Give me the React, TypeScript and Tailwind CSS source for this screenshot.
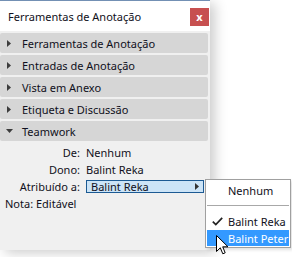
import React from 'react';

const sections = [
  { id: 'ferramentas', name: 'Ferramentas de Anotação', open: false },
  { id: 'entradas', name: 'Entradas de Anotação', open: false },
  { id: 'vista', name: 'Vista em Anexo', open: false },
  { id: 'etiqueta', name: 'Etiqueta e Discussão', open: false },
  { id: 'teamwork', name: 'Teamwork', open: true },
];

const fields = [
  { label: 'De:', value: 'Nenhum' },
  { label: 'Dono:', value: 'Balint Reka' },
];

function Caret({ open }: { open: boolean }) {
  if (open) {
    return (
      <svg width="7" height="4" viewBox="0 0 7 4" className="ml-[6px] mr-[9px] shrink-0">
        <path d="M0 0 L7 0 L3.5 4 Z" fill="#3c3c3c" />
      </svg>
    );
  }
  return (
    <svg width="4" height="7" viewBox="0 0 4 7" className="ml-[7px] mr-[11px] shrink-0">
      <path d="M0 0 L4 3.5 L0 7 Z" fill="#3c3c3c" />
    </svg>
  );
}

function Cursor() {
  return (
    <svg width="13" height="21" viewBox="0 0 13 21" className="absolute left-[216px] top-[235px]">
      <path
        d="M0.5 0.5 L0.5 16.5 L4.3 12.8 L6.8 18.8 L9.2 17.8 L6.7 11.8 L12 11.8 Z"
        fill="#ffffff"
        stroke="#000000"
        strokeWidth="1"
        strokeLinejoin="miter"
      />
    </svg>
  );
}

export default function App() {
  return (
    <div className="relative w-[292px] h-[257px] overflow-hidden bg-white text-[11px] text-[#101020] whitespace-nowrap font-['Noto_Sans',sans-serif]">
      <div className="w-[210px] h-[250px] bg-[#f0f0f0] border-t border-[#7390b4] shadow-[5px_3px_12px_rgba(0,0,0,0.2)] flex flex-col">
        <div className="h-[30px] bg-white flex items-center justify-between pl-[8px] pr-[1px]">
          <span className="text-[11px] leading-none">Ferramentas de Anotação</span>
          <div className="w-[19px] h-[18px] mt-[2px] bg-[#c75050] text-white flex items-center justify-center text-[11px] font-bold leading-none pb-[1px]">
            x
          </div>
        </div>

        <div className="flex flex-col gap-[2px] pt-[2px]">
          {sections.map((s) => (
            <div
              key={s.id}
              className="h-[20px] mr-[2px] bg-[#d6d6d6] rounded-[2px] flex items-center leading-none"
            >
              <Caret open={s.open} />
              <span>{s.name}</span>
            </div>
          ))}
        </div>

        <div className="pt-[3px] leading-none">
          {fields.map((f) => (
            <div key={f.label} className="h-[17px] flex items-center">
              <span className="w-[80px] text-right">{f.label}</span>
              <span className="ml-[6px]">{f.value}</span>
            </div>
          ))}
          <div className="h-[17px] flex items-center">
            <span className="w-[80px] text-right">Atribuído a:</span>
            <div className="ml-[6px] w-[118px] h-[13px] bg-[#cce4f7] border border-[#1c5a93] flex items-center justify-between pl-[4px] pr-[4px]">
              <span>Balint Reka</span>
              <svg width="4" height="7" viewBox="0 0 4 7">
                <path d="M0 0 L4 3.5 L0 7 Z" fill="#333333" />
              </svg>
            </div>
          </div>
          <div className="h-[16px] flex items-center pl-[5px]">Nota: Editável</div>
        </div>
      </div>

      <div className="absolute left-[205px] top-[179px] w-[86px] bg-white border border-[#a0a0a0] p-[1px] leading-none shadow-[2px_2px_3px_rgba(0,0,0,0.12)]">
        <div className="h-[18px] flex items-center pl-[21px]">Nenhum</div>
        <div className="h-px bg-[#a8a8a8] my-[6px]" />
        <div className="h-[18px] flex items-center">
          <svg width="11" height="9" viewBox="0 0 11 9" className="ml-[5px] mr-[5px] shrink-0">
            <path d="M0.8 4.6 L3.8 7.6 L10.2 0.8" fill="none" stroke="#222222" strokeWidth="1.7" />
          </svg>
          <span>Balint Reka</span>
        </div>
        <div className="h-[16px] flex items-center pl-[21px] bg-[#3399ff] text-white">Balint Peter</div>
      </div>

      <Cursor />
    </div>
  );
}
